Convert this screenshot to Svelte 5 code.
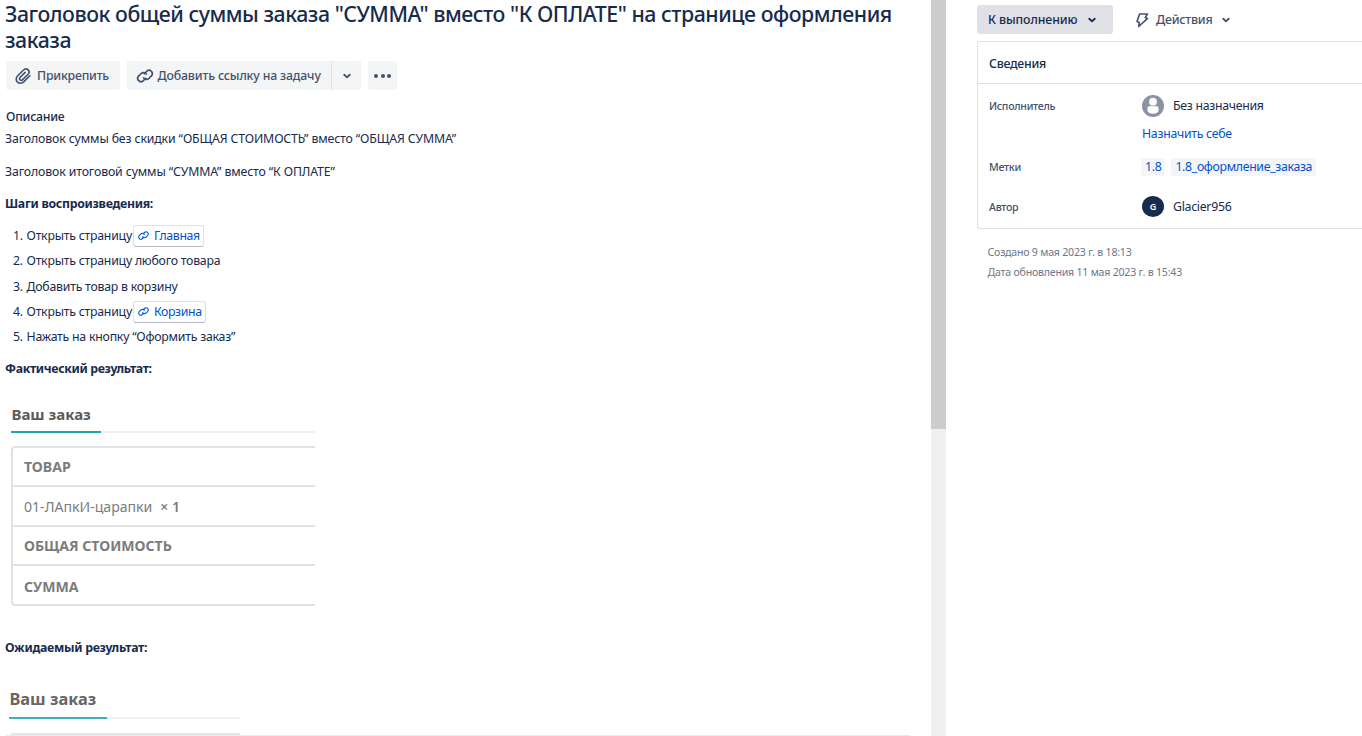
<script>
  const steps = [
    { text: 'Открыть страницу', link: 'Главная' },
    { text: 'Открыть страницу любого товара' },
    { text: 'Добавить товар в корзину' },
    { text: 'Открыть страницу', link: 'Корзина' },
    { text: 'Нажать на кнопку “Оформить заказ”' }
  ];
</script>

{#snippet chain(size)}
  <svg width={size} height={size} viewBox="0 0 24 24" fill="none" stroke="currentColor" stroke-width="2" stroke-linecap="round" stroke-linejoin="round">
    <path d="M11.2 9.2 14.4 6a4 4 0 0 1 5.6 5.6l-3.4 3.4a4 4 0 0 1-6.2-.8" />
    <path d="M12.8 14.8 9.6 18A4 4 0 0 1 4 12.4L7.4 9a4 4 0 0 1 6.2.8" />
  </svg>
{/snippet}

{#snippet chevron()}
  <svg width="10" height="8" viewBox="0 0 10 8" fill="none" stroke="currentColor" stroke-width="1.8" stroke-linecap="round" stroke-linejoin="round">
    <path d="M2.2 2.8 5 5.2 7.8 2.8" />
  </svg>
{/snippet}

<div class="page">
  <main>
    <h1>Заголовок общей суммы заказа "СУММА" вместо "К ОПЛАТЕ" на странице оформления заказа</h1>
    <div class="toolbar">
      <button class="btn attach">
        <svg width="18" height="18" viewBox="0 0 18 18" fill="none" stroke="currentColor" stroke-width="1.6" stroke-linecap="round" stroke-linejoin="round">
          <path d="M15.8 8.8 10 14.6C8 16.6 5.2 16.7 3.5 15.1 1.7 13.4 1.8 10.6 3.7 8.7L9.3 3.2C10.7 1.8 12.8 1.7 14.1 2.9 15.4 4.2 15.2 6.2 13.9 7.5L8.7 12.6C7.9 13.4 6.7 13.5 6 12.8 5.2 12.1 5.4 11 6.2 10.2L11.2 5.4" />
        </svg>
        <span>Прикрепить</span>
      </button>
      <div class="split">
        <button class="btn link">{@render chain(20)}<span>Добавить ссылку на задачу</span></button>
        <button class="btn drop">{@render chevron()}</button>
      </div>
      <button class="btn more"><i></i><i></i><i></i></button>
    </div>
    <h2>Описание</h2>
    <p>Заголовок суммы без скидки “ОБЩАЯ СТОИМОСТЬ” вместо “ОБЩАЯ СУММА”</p>
    <p class="p2">Заголовок итоговой суммы “СУММА” вместо “К ОПЛАТЕ”</p>
    <p class="b"><b>Шаги воспроизведения:</b></p>
    <ol>
      {#each steps as s, i}
        <li><span class="num">{i + 1}.</span><span>{s.text}</span>{#if s.link}<a class="card" href="#top">{@render chain(13)}<span>{s.link}</span></a>{/if}</li>
      {/each}
    </ol>
    <p class="b fact"><b>Фактический результат:</b></p>
    <section class="shot">
      <div class="head"><span>Ваш заказ</span></div>
      <div class="table">
        <div class="row"><b>ТОВАР</b></div>
        <div class="row"><span>01-ЛАпкИ-царапки</span><b class="qty">× 1</b></div>
        <div class="row"><b>ОБЩАЯ СТОИМОСТЬ</b></div>
        <div class="row"><b>СУММА</b></div>
      </div>
    </section>
    <p class="b"><b>Ожидаемый результат:</b></p>
    <section class="shot second">
      <div class="head"><span>Ваш заказ</span></div>
      <div class="table"></div>
    </section>
    <div class="bottom"></div>
  </main>
  <div class="scroll"><div class="thumb"></div></div>
  <aside>
    <div class="actions">
      <button class="status"><span>К выполнению</span>{@render chevron()}</button>
      <button class="act">
        <svg width="14" height="16" viewBox="0 0 14 16" fill="none" stroke="currentColor" stroke-width="1.6" stroke-linejoin="round">
          <path d="M4.6 2H12.400L10.200 5.600 12.600 6.400 3.700 14.500 4.300 10.400 2 9.500Z" />
        </svg>
        <span>Действия</span>{@render chevron()}
      </button>
    </div>
    <div class="panel">
      <div class="ptitle"><span>Сведения</span></div>
      <dl>
        <div class="f f1">
          <dt>Исполнитель</dt>
          <dd>
            <svg width="22" height="22" viewBox="0 0 22 22"><circle cx="11" cy="11" r="11" fill="#8993a4" /><circle cx="11" cy="6.7" r="3.9" fill="#fff" /><path d="M5.500 12.700a1.500 1.500 0 0 1 1.500-1.500h8a1.500 1.500 0 0 1 1.500 1.500v2.600c0 2-2.500 3.400-5.500 3.400s-5.500-1.400-5.500-3.400z" fill="#fff" /></svg>
            <span class="name">Без назначения</span>
          </dd>
        </div>
        <div class="f f2"><dt></dt><dd><a href="#top">Назначить себе</a></dd></div>
        <div class="f f3"><dt>Метки</dt><dd class="tags"><a href="#top">1.8</a><a href="#top">1.8_оформление_заказа</a></dd></div>
        <div class="f f4"><dt>Автор</dt><dd><i class="g">G</i><span class="name">Glacier956</span></dd></div>
      </dl>
    </div>
    <div class="dates">
      <span>Создано 9 мая 2023 г. в 18:13</span>
      <span>Дата обновления 11 мая 2023 г. в 15:43</span>
    </div>
  </aside>
</div>

<style>
  :global(body) { background: #fff; overflow: hidden; }
  .page { display: flex; width: 1362px; height: 736px; overflow: hidden; font-family: "Noto Sans", "Open Sans", sans-serif; font-size: 12.3px; color: #172b4d; box-sizing: border-box; }
  .page :global(*) { box-sizing: border-box; }
  svg { display: block; flex: none; }
  button { border: 0; font: inherit; color: #42526e; padding: 0; margin: 0; display: flex; align-items: center; white-space: nowrap; }
  a { color: #0052cc; text-decoration: none; white-space: nowrap; }
  main { width: 931px; height: 736px; overflow: hidden; padding: 1px 0 0 5px; display: flex; flex-direction: column; flex: none; }
  main > :global(*) { flex: none; }
  h1 { margin: 0; font-size: 21.3px; line-height: 25.5px; font-weight: 500; height: 60px; width: 900px; letter-spacing: -0.46px; }
  .toolbar { display: flex; gap: 7px; height: 29px; margin-left: 1px; }
  .btn { background: #f4f5f7; border-radius: 3px; height: 29px; font-weight: 500; letter-spacing: -0.15px; }
  .attach { width: 114px; padding-left: 8px; gap: 5px; letter-spacing: -0.2px; }
  .split { display: flex; gap: 1px; background: #dfe1e6; border-radius: 3px; }
  .link { width: 204px; padding-left: 8px; gap: 2.5px; border-radius: 3px 0 0 3px; }
  .drop { width: 29px; justify-content: center; border-radius: 0 3px 3px 0; }
  .more { width: 29px; justify-content: center; gap: 2.5px; }
  .more i { width: 4px; height: 4px; border-radius: 50%; background: #42526e; }
  h2 { margin: 16px 0 0 1px; font-size: 12.3px; line-height: 22px; font-weight: 500; letter-spacing: -0.24px; }
  p { margin: 0 0 11px; line-height: 22px; font-weight: 400; white-space: nowrap; letter-spacing: -0.13px; }
  p.p2 { margin-bottom: 10px; }
  p.b { margin-bottom: 8px; letter-spacing: -0.28px; }
  ol { list-style: none; margin: 0; padding: 0 0 0 8px; display: flex; flex-direction: column; letter-spacing: -0.23px; }
  li { display: flex; align-items: center; height: 25.3px; white-space: nowrap; }
  .num { width: 13.5px; flex: none; }
  .card { display: flex; align-items: center; gap: 3.5px; margin-left: 1.5px; height: 22px; padding: 0 3px; border-radius: 3px; border: 1px solid #dfe1e6; border-bottom-color: #b3bac5; letter-spacing: -0.35px; }
  p.fact { margin: 9px 0 18.500px; letter-spacing: -0.34px; }
  .shot { width: 310px; height: 238px; padding-left: 6px; }
  .head { height: 34px; border-bottom: 2px solid #eee; color: #5b5b5b; font-size: 15px; font-weight: 700; line-height: 30px; display: flex; }
  .head span { height: 34px; width: 90px; border-bottom: 2px solid #20a5ab; white-space: nowrap; text-indent: 0.5px; }
  .table { margin-top: 13px; border: 2px solid #e2e2e2; border-right: 0; border-radius: 4px 0 0 4px; color: #7c7c7c; font-size: 14.1px; height: 160px; }
  .row { height: 39.5px; display: flex; align-items: center; padding-left: 11px; border-bottom: 2px solid #e2e2e2; }
  .row:last-child { border-bottom: 0; }
  .qty { margin-left: 8px; font-weight: 600; }
  .second { width: 235px; height: 68.500px; padding: 17px 0 0 4px; overflow: hidden; }
  .second .head { height: 35px; font-size: 16.4px; line-height: 30px; color: #666; border-color: #f0f0f0; }
  .second .head span { width: 98px; height: 35px; border-color: #40b0b8; }
  .second .table { margin-top: 14px; border-color: #e6e6e6; }
  .bottom { width: 904px; height: 1px; margin-left: 1px; background: #ececec; }
  .scroll { width: 15px; background: #f0f0f0; flex: none; }
  .thumb { height: 429px; background: #cdcdcd; }
  aside { flex: 1; padding: 5px 0 0 31px; min-width: 0; }
  .actions { display: flex; height: 29px; }
  .status { width: 136px; background: #dfe1e6; color: #172b4d; border-radius: 3px; padding-left: 11px; font-weight: 500; justify-content: space-between; padding-right: 16px; letter-spacing: -0.07px; }
  .act { background: none; font-weight: 500; padding-left: 22px; letter-spacing: -0.2px; }
  .act span { margin: 0 9px 0 7px; }
  .panel { margin-top: 7px; height: 188px; border: 1px solid #dfe1e6; border-right: 0; border-radius: 3px 0 0 3px; letter-spacing: -0.28px; }
  .ptitle { height: 42px; border-bottom: 1px solid #dfe1e6; padding-left: 11px; line-height: 43px; font-weight: 500; letter-spacing: -0.23px; }
  dl { margin: 0; }
  .f { display: flex; align-items: center; padding-left: 11px; }
  dt { width: 153px; font-size: 10.6px; font-weight: 500; color: #42526e; flex: none; }
  dd { margin: 0; display: flex; align-items: center; white-space: nowrap; }
  .f1 { height: 43px; } .f2 { height: 12px; } .f3 { height: 56px; } .f4 { height: 23px; }
  .name { margin-left: 9px; }
  .tags { gap: 6px; margin-left: -1px; }
  .tags a { background: #f4f5f7; border-radius: 3px; padding: 0 4px; height: 18px; line-height: 18px; letter-spacing: -0.33px; }
  .g { width: 22px; height: 21px; border-radius: 50%; background: #172b4d; color: #fff; font: 600 9px/21px "Noto Sans", sans-serif; text-align: center; }
  .dates { padding: 13px 0 0 10.500px; font-size: 10.6px; line-height: 20px; color: #6b778c; display: flex; flex-direction: column; align-items: flex-start; letter-spacing: -0.22px; }
</style>
